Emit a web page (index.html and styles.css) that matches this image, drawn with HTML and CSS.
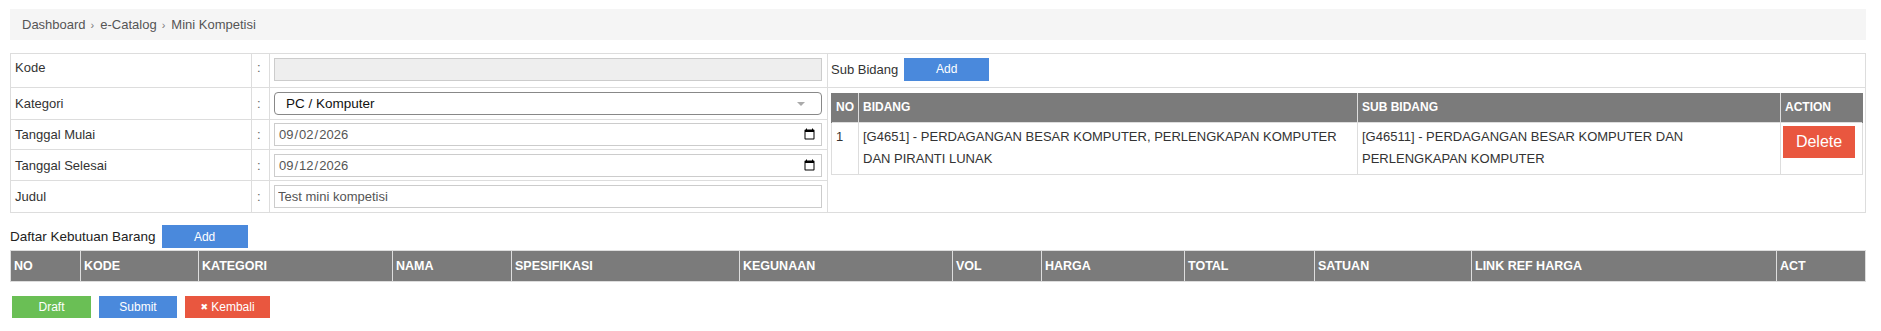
FILE: index.html
```html
<!DOCTYPE html>
<html lang="id">
<head>
<meta charset="utf-8">
<title>Mini Kompetisi</title>
<link rel="stylesheet" href="styles.css">
</head>
<body>
<div class="page">
  <nav class="breadcrumb">
    <span class="crumb">Dashboard</span><span class="sep">›</span><span class="crumb">e-Catalog</span><span class="sep">›</span><span class="crumb">Mini Kompetisi</span>
  </nav>

  <table class="form">
    <colgroup>
      <col class="c-label"><col class="c-colon"><col class="c-input"><col class="c-right">
    </colgroup>
    <tr class="r1">
      <td class="lbl">Kode</td>
      <td class="colon">:</td>
      <td class="inp"><input class="ctl ro" type="text" readonly></td>
      <td class="subhead"><span class="subtitle">Sub Bidang</span><button class="btn btn-blue btn-add">Add</button></td>
    </tr>
    <tr class="r2">
      <td class="lbl">Kategori</td>
      <td class="colon">:</td>
      <td class="inp">
        <div class="select-wrap">
          <select class="sel"><option>PC / Komputer</option></select>
        </div>
      </td>
      <td class="subcell" rowspan="4">
        <table class="inner">
          <colgroup><col class="i-no"><col class="i-bidang"><col class="i-sub"><col class="i-act"></colgroup>
          <thead>
            <tr><th>NO</th><th>BIDANG</th><th>SUB BIDANG</th><th>ACTION</th></tr>
          </thead>
          <tbody>
            <tr>
              <td>1</td>
              <td>[G4651] - PERDAGANGAN BESAR KOMPUTER, PERLENGKAPAN KOMPUTER DAN PIRANTI LUNAK</td>
              <td>[G46511] - PERDAGANGAN BESAR KOMPUTER DAN PERLENGKAPAN KOMPUTER</td>
              <td class="act"><button class="btn btn-red btn-del">Delete</button></td>
            </tr>
          </tbody>
        </table>
      </td>
    </tr>
    <tr class="r3">
      <td class="lbl">Tanggal Mulai</td>
      <td class="colon">:</td>
      <td class="inp"><input class="ctl" type="date" value="2026-09-02"></td>
    </tr>
    <tr class="r4">
      <td class="lbl">Tanggal Selesai</td>
      <td class="colon">:</td>
      <td class="inp"><input class="ctl" type="date" value="2026-09-12"></td>
    </tr>
    <tr class="r5">
      <td class="lbl">Judul</td>
      <td class="colon">:</td>
      <td class="inp"><input class="ctl" type="text" value="Test mini kompetisi"></td>
    </tr>
  </table>

  <section class="needs">
    <div class="needs-head">
      <span class="needs-title">Daftar Kebutuan Barang</span>
      <button class="btn btn-blue btn-add2">Add</button>
    </div>
    <table class="items">
      <colgroup>
        <col class="k-no"><col class="k-kode"><col class="k-kat"><col class="k-nama"><col class="k-spek"><col class="k-guna"><col class="k-vol"><col class="k-harga"><col class="k-total"><col class="k-sat"><col class="k-link"><col class="k-act">
      </colgroup>
      <thead>
        <tr>
          <th>NO</th><th>KODE</th><th>KATEGORI</th><th>NAMA</th><th>SPESIFIKASI</th><th>KEGUNAAN</th><th>VOL</th><th>HARGA</th><th>TOTAL</th><th>SATUAN</th><th>LINK REF HARGA</th><th>ACT</th>
        </tr>
      </thead>
    </table>
    <div class="actions">
      <button class="btn btn-green btn-foot">Draft</button>
      <button class="btn btn-blue btn-foot">Submit</button>
      <button class="btn btn-red btn-foot btn-back"><span class="x">✖</span> Kembali</button>
    </div>
  </section>
</div>
</body>
</html>
```

FILE: styles.css
```css
* { box-sizing: border-box; }

body {
  margin: 0;
  background: #fff;
  font-family: "Liberation Sans", Arial, sans-serif;
  font-size: 13px;
  color: #333;
}

.page {
  padding: 9px 15px 0 10px;
}

/* breadcrumb */
.breadcrumb {
  height: 31px;
  line-height: 31px;
  background: #f5f5f5;
  padding-left: 12px;
  color: #555;
  font-size: 13px;
}
.breadcrumb .sep {
  display: inline-block;
  padding: 0 6px 0 5px;
  font-size: 11px;
  color: #777;
}

/* form table */
.form {
  margin-top: 13px;
  width: 1856px;
  border-collapse: collapse;
  table-layout: fixed;
}
.c-label { width: 241px; }
.c-colon { width: 18px; }
.c-input { width: 558px; }

.form > tbody > tr > td {
  border: 1px solid #ddd;
  padding: 0 4px;
  vertical-align: middle;
}
.form .r1 { height: 34px; }
.form .r2 { height: 32px; }
.form .r3 { height: 30px; }
.form .r4 { height: 31px; }
.form .r5 { height: 32px; }

.form .r1 td.lbl,
.form .r1 td.colon { padding-bottom: 6px; }
.form .r1 td.inp { padding-bottom: 3px; }
.form .r1 td.subhead { padding-bottom: 3px; }

.form td.colon {
  color: #666;
  padding-left: 5px;
}
.form td.inp {
  padding: 0 5px 0 4px;
}

.ctl {
  display: block;
  width: 100%;
  height: 23px;
  border: 1px solid #ccc;
  background: #fff;
  padding: 0 3px;
  font-family: "Liberation Sans", Arial, sans-serif;
  font-size: 13px;
  color: #555;
  outline: none;
}
.ctl.ro { background: #eee; }

.select-wrap {
  position: relative;
}
.select-wrap::after {
  content: "";
  position: absolute;
  right: 17px;
  top: 10px;
  border-left: 4px solid transparent;
  border-right: 4px solid transparent;
  border-top: 4px solid #aaa;
}
.sel {
  display: block;
  width: 100%;
  height: 23px;
  appearance: none;
  -webkit-appearance: none;
  border: 1px solid #888;
  border-radius: 4px;
  background: #fff;
  padding: 0 11px;
  font-family: "Liberation Sans", Arial, sans-serif;
  font-size: 13.5px;
  color: #111;
}

/* right side: sub bidang */
.form td.subhead {
  padding: 0 3px;
  white-space: nowrap;
}
.subtitle { vertical-align: middle; }
.btn {
  border: none;
  color: #fff;
  cursor: pointer;
  font-family: "Liberation Sans", Arial, sans-serif;
  padding: 0;
}
.btn-blue { background: #4a89dc; }
.btn-red { background: #e9573f; }
.btn-green { background: #6abf55; }

.btn-add {
  width: 85px;
  height: 23px;
  margin-left: 6px;
  font-size: 12px;
  vertical-align: middle;
}

.form td.subcell {
  vertical-align: top;
  padding: 5px 4px 0 3px;
}

.inner {
  width: 100%;
  border-collapse: collapse;
  table-layout: fixed;
}
.i-no { width: 27px; }
.i-bidang { width: 499px; }
.i-sub { width: 423px; }
.i-act { width: 82px; }

.inner th {
  background: #7b7b7b;
  color: #fff;
  font-weight: bold;
  font-size: 12px;
  text-align: left;
  height: 29px;
  padding: 0 4px;
  border: 1px solid #ddd;
  border-top: none;
  border-bottom: none;
}
.inner th:first-child { border-left: 1px solid #7b7b7b; }
.inner th:last-child { border-right: 1px solid #7b7b7b; }
.inner td {
  border: 1px solid #ddd;
  padding: 3px 4px 4px;
  line-height: 22px;
  vertical-align: top;
  font-size: 13px;
  color: #333;
}
.inner td.act {
  padding: 3px 3px 4px 2px;
}
.btn-del {
  width: 72px;
  height: 32px;
  font-size: 16px;
  vertical-align: top;
}

/* needs section */
.needs {
  margin-top: 12px;
}
.needs-head {
  display: flex;
  align-items: center;
  gap: 6px;
  height: 23px;
}
.needs-title {
  font-size: 13.5px;
  color: #222;
}
.btn-add2 {
  width: 86px;
  height: 23px;
  font-size: 12px;
}

.items {
  margin-top: 2px;
  width: 1855px;
  border-collapse: collapse;
  table-layout: fixed;
}
.k-no { width: 70px; }
.k-kode { width: 118px; }
.k-kat { width: 194px; }
.k-nama { width: 119px; }
.k-spek { width: 228px; }
.k-guna { width: 213px; }
.k-vol { width: 89px; }
.k-harga { width: 143px; }
.k-total { width: 130px; }
.k-sat { width: 157px; }
.k-link { width: 305px; }
.k-act { width: 89px; }

.items th {
  background: #7b7b7b;
  color: #fff;
  font-weight: bold;
  font-size: 12.5px;
  text-align: left;
  height: 31px;
  padding: 0 3px;
  border: 1px solid #ddd;
}

.actions {
  display: flex;
  gap: 8px;
  margin-top: 14px;
  padding-left: 2px;
}
.btn-foot {
  width: 79px;
  height: 22px;
  font-size: 12px;
}
.btn-foot + .btn-foot { width: 78px; }
.btn-foot.btn-back { width: 85px; }
.btn-back .x {
  font-size: 9px;
  font-family: "DejaVu Sans", sans-serif;
  vertical-align: 1px;
}
```
